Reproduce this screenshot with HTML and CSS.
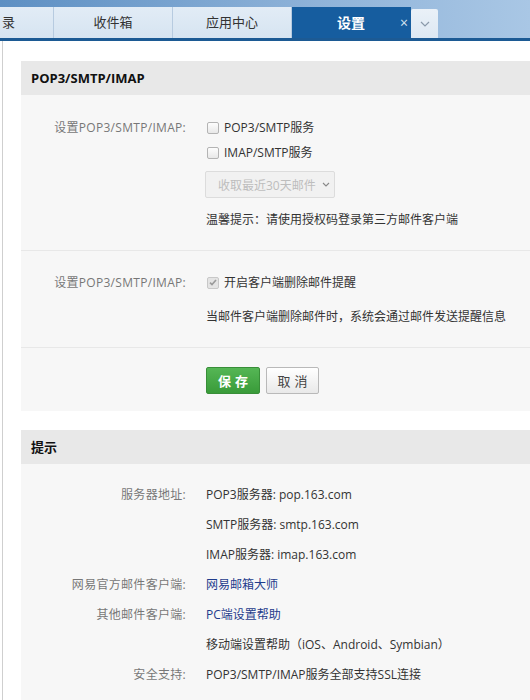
FILE: index.html
```html
<!DOCTYPE html>
<html lang="zh-CN">
<head>
    <meta charset="UTF-8">
    <title>设置 - POP3/SMTP/IMAP</title>
    <link rel="stylesheet" href="styles.css">
</head>
<body>
    <div class="topbar">
        <div class="tab tab-cut">录</div>
        <div class="tab">收件箱</div>
        <div class="tab">应用中心</div>
        <div class="tab tab-active">设置<span class="tab-close">×</span></div>
        <div class="tab-more">
            <svg width="10" height="6" viewBox="0 0 10 6"><path d="M1 1l4 4 4-4" fill="none" stroke="#8a99aa" stroke-width="1.2"/></svg>
        </div>
    </div>

    <div class="main">
        <div class="section">
            <div class="section-head">POP3/SMTP/IMAP</div>
            <div class="section-body">
                <div class="block">
                    <div class="field">
                        <div class="label">设置POP3/SMTP/IMAP:</div>
                        <div class="value">
                            <div class="line"><span class="cb"></span>POP3/SMTP服务</div>
                            <div class="line"><span class="cb"></span>IMAP/SMTP服务</div>
                            <div class="select">收取最近30天邮件
                                <svg width="8" height="5" viewBox="0 0 8 5"><path d="M1 1l3 3 3-3" fill="none" stroke="#888" stroke-width="1.1"/></svg>
                            </div>
                            <div class="line hint">温馨提示：请使用授权码登录第三方邮件客户端</div>
                        </div>
                    </div>
                </div>
                <div class="block">
                    <div class="field">
                        <div class="label">设置POP3/SMTP/IMAP:</div>
                        <div class="value">
                            <div class="line"><span class="cb cb-on">
                                <svg width="8" height="7" viewBox="0 0 8 7"><path d="M1 3.6l2 2L7 1" fill="none" stroke="#9a9a9a" stroke-width="1.6"/></svg>
                            </span>开启客户端删除邮件提醒</div>
                            <div class="line hint">当邮件客户端删除邮件时，系统会通过邮件发送提醒信息</div>
                        </div>
                    </div>
                </div>
                <div class="block block-btns">
                    <div class="field">
                        <div class="label"></div>
                        <div class="value btns">
                            <button class="btn btn-ok">保存</button>
                            <button class="btn btn-cancel">取消</button>
                        </div>
                    </div>
                </div>
            </div>
        </div>

        <div class="section">
            <div class="section-head">提示</div>
            <div class="section-body info">
                <div class="field">
                    <div class="label">服务器地址:</div>
                    <div class="value">
                        <div class="line">POP3服务器: pop.163.com</div>
                        <div class="line">SMTP服务器: smtp.163.com</div>
                        <div class="line">IMAP服务器: imap.163.com</div>
                    </div>
                </div>
                <div class="field">
                    <div class="label">网易官方邮件客户端:</div>
                    <div class="value"><div class="line"><a href="#" class="link">网易邮箱大师</a></div></div>
                </div>
                <div class="field">
                    <div class="label">其他邮件客户端:</div>
                    <div class="value">
                        <div class="line"><a href="#" class="link">PC端设置帮助</a></div>
                        <div class="line">移动端设置帮助（iOS、Android、Symbian）</div>
                    </div>
                </div>
                <div class="field">
                    <div class="label">安全支持:</div>
                    <div class="value"><div class="line">POP3/SMTP/IMAP服务全部支持SSL连接</div></div>
                </div>
            </div>
        </div>
    </div>
</body>
</html>
```

FILE: styles.css
```css
body {
    margin: 0;
    width: 530px;
    height: 700px;
    overflow: hidden;
    background-color: white;
    font-family: "Open Sans", "Noto Sans CJK SC", sans-serif;
    font-size: 12px;
    color: #333;
}

.topbar {
    height: 41px;
    padding-top: 7px;
    box-sizing: border-box;
    display: flex;
    align-items: flex-end;
    background: linear-gradient(to right, #5d8fc3, #8fb3d9 60%, #a9c7e5);
    border-bottom: 3px solid #1c5a94;
}

.tab {
    width: 118px;
    height: 31px;
    line-height: 31px;
    text-align: center;
    font-size: 13px;
    color: #333;
    background: linear-gradient(#e2ecf6, #d6e4f1);
    border-right: 1px solid #b7cbe0;
    flex-shrink: 0;
}

.tab-cut {
    margin-left: -65px;
    text-align: right;
    padding-right: 38px;
    width: 80px;
}

.tab-active {
    position: relative;
    background: #165d9f;
    color: white;
    font-weight: bold;
    font-size: 14px;
    border-right: 1px solid #165d9f;
}

.tab-close {
    position: absolute;
    right: 2px;
    top: 0;
    font-size: 14px;
    font-weight: normal;
    color: #d6e4f2;
}

.tab-more {
    width: 27px;
    height: 29px;
    display: flex;
    align-items: center;
    justify-content: center;
    background: linear-gradient(#eaf1f8, #dde8f3);
    border-radius: 2px 2px 0 0;
}

.main {
    margin-left: 2px;
    border-left: 1px solid #cfcfcf;
    padding: 20px 0 0 18px;
    height: 659px;
    box-sizing: border-box;
    overflow: hidden;
}

.section {
    margin-bottom: 19px;
}

.section-head {
    height: 34px;
    line-height: 34px;
    padding-left: 10px;
    background-color: #e8e8e8;
    font-size: 13px;
    font-weight: bold;
    color: #111;
}

.section-body {
    background-color: #f7f7f7;
}

.block {
    padding: 20px 0 18px;
    border-bottom: 1px solid #e8e8e8;
}

.block + .block {
    padding-top: 19px;
}

.block-btns {
    padding: 16px 0 17px;
    border-bottom: none;
}

.field {
    display: grid;
    grid-template-columns: 165px 1fr;
    column-gap: 20px;
}

.label {
    text-align: right;
    line-height: 25px;
    color: #777;
    letter-spacing: 0.3px;
}

.line {
    line-height: 25px;
    display: flex;
    align-items: center;
    white-space: nowrap;
}

.hint {
    margin-top: 9px;
}

.cb {
    width: 10px;
    height: 10px;
    border: 1px solid #b4b4b4;
    border-radius: 2px;
    background: linear-gradient(#fdfdfd, #e8e8e8);
    margin: 0 5px 0 1px;
    display: inline-flex;
    align-items: center;
    justify-content: center;
}

.cb-on {
    background: #e4e4e4;
    border-color: #c8c8c8;
}

.select {
    margin-top: 6px;
    margin-left: -1px;
    width: 116px;
    height: 25px;
    padding-left: 12px;
    border: 1px solid #dcdcdc;
    border-radius: 2px;
    background-color: #f1f1f1;
    color: #bdbdbd;
    display: flex;
    align-items: center;
    gap: 6px;
}

.btns {
    display: flex;
    gap: 6px;
}

.btn {
    height: 27px;
    border-radius: 2px;
    font-family: "Open Sans", "Noto Sans CJK SC", sans-serif;
    font-size: 13px;
    letter-spacing: 4px;
    padding: 0 0 0 4px;
}

.btn-ok {
    width: 54px;
    background: linear-gradient(#55b655, #399b39);
    border: 1px solid #388e38;
    color: white;
    font-weight: bold;
}

.btn-cancel {
    width: 53px;
    background: linear-gradient(#ffffff, #e9e9e9);
    border: 1px solid #b9b9b9;
    color: #444;
}

.info {
    padding: 16px 0 10px;
}

.info .label,
.info .line {
    line-height: 30px;
}

.link {
    color: #1f3c8c;
    text-decoration: none;
}
```
